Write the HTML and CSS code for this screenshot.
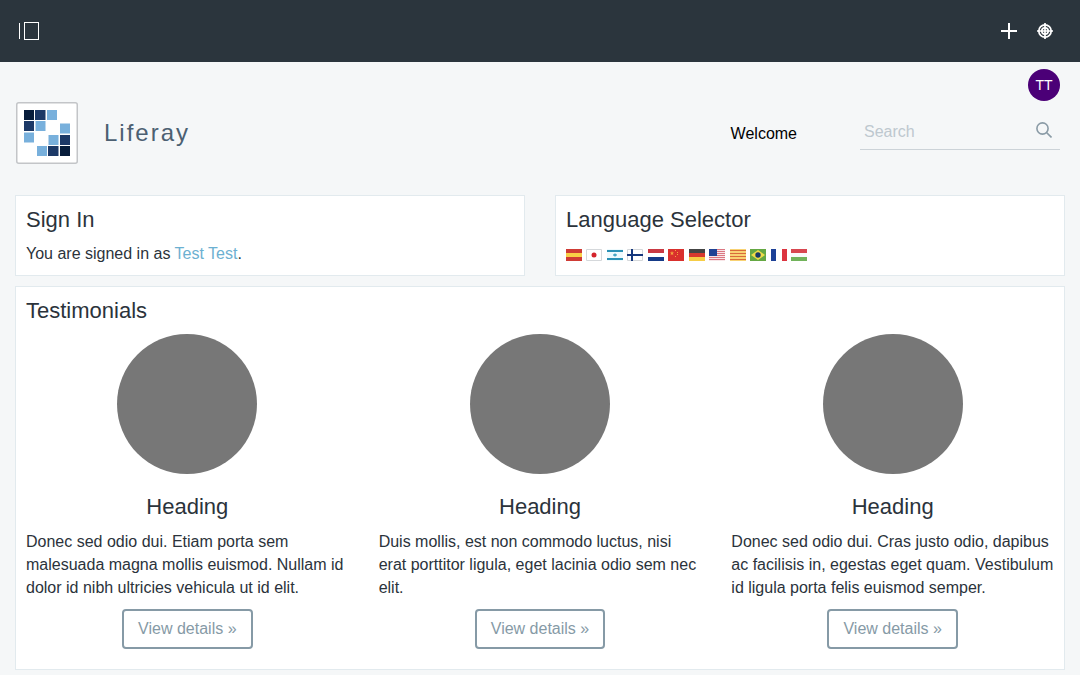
FILE: index.html
```html
<!DOCTYPE html>
<html lang="en">
<head>
<meta charset="utf-8">
<meta name="viewport" content="width=device-width, initial-scale=1">
<title>Welcome - Liferay</title>
<link rel="stylesheet" href="styles.css">
</head>
<body>
<div class="control-bar">
  <button class="icon-button" type="button" aria-label="Product menu">
    <svg width="22" height="20" viewBox="0 0 22 20" fill="none" stroke="currentColor"><path d="M1.5 2v16"/><rect x="6.5" y="1.5" width="14" height="17"/></svg>
  </button>
  <div class="control-tools">
    <button class="icon-button" type="button" aria-label="Add">
      <svg width="18" height="18" viewBox="0 0 18 18" fill="none" stroke="currentColor" stroke-width="2"><path d="M9 1v16M1 9h16"/></svg>
    </button>
    <button class="icon-button" type="button" aria-label="Simulation">
      <svg width="18" height="18" viewBox="0 0 18 18" fill="none" stroke="currentColor" stroke-width="1.7"><circle cx="9" cy="9" r="6.2"/><circle cx="9" cy="9" r="3.2"/><path d="M9 1v16M1 9h16"/></svg>
    </button>
  </div>
</div>
<header class="site-header">
  <div class="user-row"><a class="avatar" href="#" aria-label="Test Test">TT</a></div>
  <div class="banner">
    <a class="brand" href="#">
      <svg class="logo" width="62" height="62" viewBox="0 0 62 62" aria-hidden="true">
        <rect x=".75" y=".75" width="60.5" height="60.5" rx="2" fill="#fff" stroke="#c3c5c8" stroke-width="1.5"/>
        <g fill="#071d3b"><rect x="8" y="8" width="10" height="10"/><rect x="44" y="44" width="10" height="10"/></g>
        <g fill="#1c3967"><rect x="19" y="8" width="10.500" height="10"/><rect x="8" y="19" width="10" height="10"/><rect x="44" y="33" width="10" height="10"/><rect x="32" y="44" width="10.500" height="10"/></g>
        <g fill="#78b0dc"><rect x="31" y="8" width="10" height="10"/><rect x="19.500" y="19" width="10" height="10"/><rect x="44" y="21.500" width="10" height="10"/><rect x="8" y="30.500" width="10" height="10"/><rect x="32.500" y="33" width="10" height="10"/><rect x="21" y="44" width="10" height="10"/></g>
      </svg>
      <span class="site-name">Liferay</span>
    </a>
    <nav class="site-nav"><a href="#">Welcome</a></nav>
    <form class="search" role="search">
      <input class="search-input" type="text" placeholder="Search" aria-label="Search">
      <button class="search-button" type="button" aria-label="Submit search">
        <svg width="16" height="16" viewBox="0 0 16 16" fill="none" stroke="currentColor" stroke-width="1.6"><circle cx="6.5" cy="6.500" r="5.6"/><path d="M10.500 10.500l5 5"/></svg>
      </button>
    </form>
  </div>
</header>
<main class="content">
  <div class="split">
    <section class="panel">
      <h2>Sign In</h2>
      <p>You are signed in as <a class="link" href="#">Test Test</a>.</p>
    </section>
    <section class="panel">
      <h2>Language Selector</h2>
      <div class="flags">
        <a href="#" aria-label="Spanish"><svg class="flag" viewBox="0 0 16 12"><path fill="#cf3b35" d="M0 0h16v12H0z"/><path fill="#f8cf46" d="M0 4h16v4H0z"/></svg></a>
        <a href="#" aria-label="Japanese"><svg class="flag" viewBox="0 0 16 12"><path fill="#fff" stroke="#d5d8db" d="M.5.5h15v11H.5z"/><circle cx="8" cy="6" r="2.5" fill="#d4242c"/></svg></a>
        <a href="#" aria-label="Hebrew"><svg class="flag" viewBox="0 0 16 12"><path fill="#eefafd" d="M0 0h16v12H0z"/><path fill="#2b91b5" d="M0 1h16v2H0zM0 9h16v2H0z"/><path fill="#48a6c3" d="M8 4l2 3H6zM8 8L6 5h4z"/></svg></a>
        <a href="#" aria-label="Finnish"><svg class="flag" viewBox="0 0 16 12"><path fill="#fff" stroke="#d5d8db" d="M.5.5h15v11H.5z"/><path fill="#16387d" d="M4 0h2v12H4zM0 5h16v2H0z"/></svg></a>
        <a href="#" aria-label="Dutch"><svg class="flag" viewBox="0 0 16 12"><path fill="#fff" d="M0 0h16v12H0z"/><path fill="#c93943" d="M0 0h16v4H0z"/><path fill="#153a87" d="M0 8h16v4H0z"/></svg></a>
        <a href="#" aria-label="Chinese"><svg class="flag" viewBox="0 0 16 12"><path fill="#d9302d" d="M0 0h16v12H0z"/><path fill="#f4a53d" d="M4 2l.6 1.5H6L4.900 4.600l.5 1.600L4 5.200 2.600 6.200l.5-1.600L2 3.500h1.400zM7 1h1v1H7zM9 3h1v1H9zM9 5h1v1H9zM7 7h1v1H7z"/></svg></a>
        <a href="#" aria-label="German"><svg class="flag" viewBox="0 0 16 12"><path fill="#444" d="M0 0h16v4H0z"/><path fill="#d7392e" d="M0 4h16v4H0z"/><path fill="#f6cd46" d="M0 8h16v4H0z"/></svg></a>
        <a href="#" aria-label="English"><svg class="flag" viewBox="0 0 16 12"><path fill="#f8e6e8" d="M0 0h16v12H0z"/><path fill="#db7782" d="M0 0h16v1H0zM0 2h16v1H0zM0 4h16v1H0zM0 6h16v1H0zM0 8h16v1H0zM0 10h16v1H0z"/><path fill="#204394" d="M0 0h8v7H0z"/></svg></a>
        <a href="#" aria-label="Catalan"><svg class="flag" viewBox="0 0 16 12"><path fill="#f8d273" d="M0 0h16v12H0z"/><path fill="#d96b3b" d="M0 1h16v1H0zM0 4h16v1H0zM0 7h16v1H0zM0 10h16v1H0z"/></svg></a>
        <a href="#" aria-label="Portuguese"><svg class="flag" viewBox="0 0 16 12"><path fill="#65a843" d="M0 0h16v12H0z"/><path fill="#f0dc48" d="M8 1l7 5-7 5-7-5z"/><circle cx="8" cy="6" r="2.7" fill="#193968"/></svg></a>
        <a href="#" aria-label="French"><svg class="flag" viewBox="0 0 16 12"><path fill="#fff" d="M0 0h16v12H0z"/><path fill="#1d4197" d="M0 0h5v12H0z"/><path fill="#dc3440" d="M11 0h5v12h-5z"/></svg></a>
        <a href="#" aria-label="Hungarian"><svg class="flag" viewBox="0 0 16 12"><path fill="#fafafa" d="M0 0h16v12H0z"/><path fill="#d84750" d="M0 0h16v4H0z"/><path fill="#71b35b" d="M0 8h16v4H0z"/></svg></a>
      </div>
    </section>
  </div>
  <section class="panel">
    <h2>Testimonials</h2>
    <div class="testimonials">
      <article class="testimonial">
        <div class="portrait"></div>
        <h3>Heading</h3>
        <p>Donec sed odio dui. Etiam porta sem malesuada magna mollis euismod. Nullam id dolor id nibh ultricies vehicula ut id elit.</p>
        <a class="details" href="#">View details »</a>
      </article>
      <article class="testimonial">
        <div class="portrait"></div>
        <h3>Heading</h3>
        <p>Duis mollis, est non commodo luctus, nisi erat porttitor ligula, eget lacinia odio sem nec elit.</p>
        <a class="details" href="#">View details »</a>
      </article>
      <article class="testimonial">
        <div class="portrait"></div>
        <h3>Heading</h3>
        <p>Donec sed odio dui. Cras justo odio, dapibus ac facilisis in, egestas eget quam. Vestibulum id ligula porta felis euismod semper.</p>
        <a class="details" href="#">View details »</a>
      </article>
    </div>
  </section>
</main>
</body>
</html>
```
FILE: styles.css
```css
* { box-sizing: border-box; }
body {
  margin: 0;
  background: #f5f7f8;
  color: #2b333b;
  font: 16px/23px "Liberation Sans", Arial, sans-serif;
}
a { color: inherit; text-decoration: none; }
h2, h3 { margin: 0; font-size: 22px; font-weight: 400; }
h2 { margin-bottom: 8px; line-height: 28px; }
h3 { margin-bottom: 10px; line-height: 26px; }
p { margin: 0; }
svg { display: block; }
button { padding: 0; border: 0; background: none; cursor: pointer; }

.control-bar {
  display: flex;
  align-items: center;
  justify-content: space-between;
  padding: 20px 26px 20px 18px;
  background: #2b353d;
}
.control-tools { display: flex; gap: 18px; }
.icon-button { display: flex; align-items: center; height: 22px; color: #fff; }

.user-row { display: flex; justify-content: flex-end; padding: 7px 20px 1px; }
.avatar {
  width: 32px;
  height: 32px;
  border-radius: 50%;
  background: #4b0077;
  color: #fff;
  font-size: 14px;
  line-height: 32px;
  text-align: center;
}
.banner { display: flex; align-items: center; padding: 0 20px 31px 16px; }
.brand { display: flex; align-items: center; gap: 26px; margin-right: auto; }
.site-name { color: #4c6072; font-size: 24px; line-height: 28px; letter-spacing: 2px; }
.site-nav { margin-right: 63px; color: #000; }
.search {
  display: flex;
  align-items: center;
  width: 200px;
  height: 34px;
  padding-bottom: 2px;
  border-bottom: 1px solid #ccd3d8;
}
.search-input {
  flex: 1;
  min-width: 0;
  padding: 0 4px;
  border: 0;
  outline: 0;
  background: none;
  color: #2b333b;
  font: inherit;
}
.search-input::placeholder { color: #bec8cf; opacity: 1; }
.search-button { padding: 0 8px 4px; color: #8a9ba6; }

.content { display: grid; gap: 10px; padding: 0 15px 5px; }
.split { display: grid; grid-template-columns: 1fr 1fr; gap: 30px; }
.panel { padding: 10px; border: 1px solid #e2eaee; background: #fff; }
.link { color: #6cb0d1; }
.flag { display: inline-block; width: 16px; height: 12px; vertical-align: middle; }
.testimonials { display: grid; grid-template-columns: repeat(3, 1fr); gap: 30px; padding: 1px 0 10px; }
.testimonial { display: flex; flex-direction: column; align-items: center; }
.testimonial p { align-self: stretch; margin-bottom: 10px; }
.portrait { width: 140px; height: 140px; margin-bottom: 20px; border-radius: 50%; background: #777; }
.details {
  padding: 6px 14px;
  border: 2px solid #869aa6;
  border-radius: 4px;
  color: #869aa6;
  line-height: 24px;
}
```
